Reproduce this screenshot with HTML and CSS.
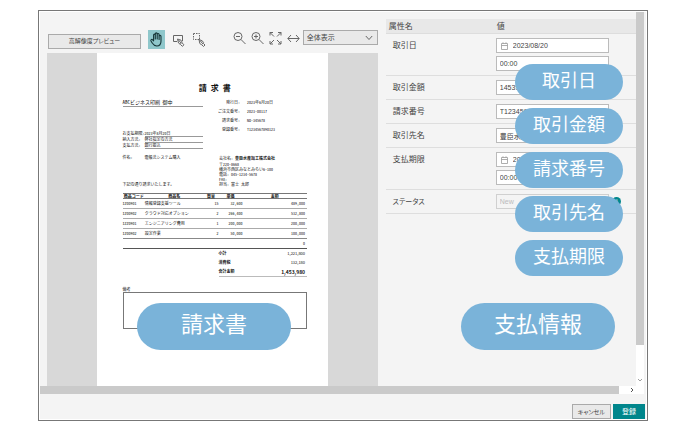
FILE: index.html
```html
<!DOCTYPE html>
<html lang="ja">
<head>
<meta charset="utf-8">
<title>支払情報登録</title>
<link rel="stylesheet" href="styles.css">
</head>
<body>
<main class="window">
  <div class="scroller">
    <div class="panes">
      <section class="preview">
        <div class="toolbar">
          <button class="btn btn-wide" type="button">高解像度プレビュー</button>
          <div class="tools">
            <button class="tool tool-active" type="button" aria-label="手のひら">
              <svg width="17" height="19" viewBox="0 0 17 19"><path d="M5.6 10.8V5.2c0-1.5 1.7-1.5 1.7 0V9 4c0-1.5 1.9-1.5 1.9 0v5-4.400c0-1.500 1.900-1.500 1.900 0V9.500 6.400c0-1.400 1.900-1.400 1.900 0V11c0 3-1.400 5-4.200 5-2.400 0-3.300-1-4.400-2.700L3 11c-.7-1.300.8-2 1.600-1.200z" fill="none" stroke="#163537" stroke-width="1.100" stroke-linejoin="round"/></svg>
            </button>
            <button class="tool" type="button" aria-label="矩形選択">
              <svg width="13" height="16" viewBox="0 0 13 16" fill="none" stroke="#666"><path d="M5 9.500H1.500v-6h9V9"/><path d="M5.500 7l1 4 1.700 1.200 2-2L9 8.200zM6.500 8l2.500 3M8.300 12.300l2 2 1.700-1.500-2-2"/></svg>
            </button>
            <button class="tool" type="button" aria-label="範囲選択">
              <svg width="14" height="16" viewBox="0 0 14 16" fill="none" stroke="#666"><path d="M1.500 1.500h6v6h-6z" stroke-dasharray="1.500 1"/><path d="M7 7.500l.8 4 1.700 1.200 2-2-1.200-1.900zM8 8.500l2.500 3M9.800 12.800l1.700 1.700 1.500-1.500-1.700-1.700"/></svg>
            </button>
          </div>
          <div class="zooms">
            <button class="tool" type="button" aria-label="縮小">
              <svg width="13" height="14" viewBox="0 0 13 14" fill="none" stroke="#666"><circle cx="5" cy="5.500" r="4"/><path d="M8 8.500l4.500 4.500M3 5.500h4"/></svg>
            </button>
            <button class="tool" type="button" aria-label="拡大">
              <svg width="13" height="14" viewBox="0 0 13 14" fill="none" stroke="#666"><circle cx="5" cy="5.500" r="4"/><path d="M8 8.500l4.500 4.500M3 5.500h4M5 3.500v4"/></svg>
            </button>
            <button class="tool" type="button" aria-label="全画面">
              <svg width="13" height="14" viewBox="0 0 13 14" fill="none" stroke="#666"><path d="M1 4.500v-3h3M1 1.500l4 4M9 1.500h3v3M12 1.500l-4 4M1 10v3h3M1 13l4-4M12 10v3H9M12 13L8 9"/></svg>
            </button>
            <button class="tool" type="button" aria-label="幅に合わせる">
              <svg width="13" height="14" viewBox="0 0 13 14" fill="none" stroke="#666"><path d="M1 7.500h11M4 4L.8 7.500 4 11M9 4l3.200 3.500L9 11"/></svg>
            </button>
          </div>
          <div class="select-wrap">
            <select class="select" aria-label="表示倍率"><option>全体表示</option></select>
            <svg class="chevron" width="8" height="6" viewBox="0 0 8 6"><path d="M.8 1L4 4.500 7.200 1" fill="none" stroke="#666"/></svg>
          </div>
        </div>

        <div class="viewer">
          <article class="paper">
            <h1 class="doc-title">請 求 書</h1>
            <div class="doc-top">
              <div>
                <p class="client">ABCビジネス印刷　御中</p>
                <dl class="terms">
                  <dt>お支払期限：</dt><dd>2023年8月20日</dd>
                  <dt>納入方法：</dt><dd>弊社指定の方法</dd>
                  <dt>支払方法：</dt><dd>銀行振込</dd>
                </dl>
              </div>
              <dl class="meta">
                <dt>発行日：</dt><dd>2023年6月20日</dd>
                <dt>ご注文番号：</dt><dd>2023-00117</dd>
                <dt>請求番号：</dt><dd>NO-345678</dd>
                <dt>登録番号：</dt><dd>T1234567890123</dd>
              </dl>
            </div>
            <div class="doc-mid">
              <div class="subject">
                <p class="pair"><span>件名：</span><span>電帳法システム購入</span></p>
                <p>下記の通り請求いたします。</p>
              </div>
              <div class="sender">
                <p class="company">会社名： <strong>豊臣水産加工株式会社</strong></p>
                <p>〒220-8668</p>
                <p>横浜市西区みなとみらい6-100</p>
                <p>電話： 045-1234-5678</p>
                <p>FAX：</p>
                <p>担当： 富士　太郎</p>
              </div>
            </div>
            <table class="items">
              <colgroup><col class="c-code"><col class="c-name"><col class="c-qty"><col class="c-price"><col></colgroup>
              <thead><tr><th>商品コード</th><th>商品名</th><th>数量</th><th>単価</th><th>金額</th></tr></thead>
              <tbody>
                <tr><td>IZ00901</td><td>情報登録支援ツール</td><td>15</td><td>32,600</td><td>489,000</td></tr>
                <tr><td>IZ00902</td><td>クラウド対応オプション</td><td>2</td><td>266,400</td><td>532,800</td></tr>
                <tr><td>IZZ0901</td><td>エンジニアリング費用</td><td>1</td><td>200,000</td><td>200,000</td></tr>
                <tr><td>IZ00902</td><td>設定作業</td><td>2</td><td>50,000</td><td>100,000</td></tr>
                <tr><td></td><td></td><td></td><td></td><td>0</td></tr>
              </tbody>
            </table>
            <dl class="totals">
              <dt>小計</dt><dd>1,221,800</dd>
              <dt>消費税</dt><dd>132,180</dd>
              <dt>合計金額</dt><dd class="grand">1,453,980</dd>
            </dl>
            <p class="note-label">備考</p>
            <div class="note"></div>
          </article>
          <div class="callout callout-big callout-doc">請求書</div>
        </div>
      </section>

      <section class="attributes">
        <table class="attrs">
          <thead><tr><th>属性名</th><th>値</th></tr></thead>
          <tbody>
            <tr>
              <td><label for="tx-date">取引日</label></td>
              <td>
                <div class="fields">
                  <div class="date">
                    <svg width="7" height="8" viewBox="0 0 7 8" fill="none" stroke="#999" stroke-width=".8"><path d="M.5 1.500h6v6h-6zM.5 3.500h6M2 .3v1.400M5 .3v1.400"/></svg>
                    <input id="tx-date" type="text" value="2023/08/20">
                  </div>
                  <input class="field" type="text" value="00:00" aria-label="取引日の時刻">
                </div>
              </td>
            </tr>
            <tr><td><label for="amount">取引金額</label></td><td><div class="fields"><input class="field" id="amount" type="text" value="1453980"></div></td></tr>
            <tr><td><label for="number">請求番号</label></td><td><div class="fields"><input class="field" id="number" type="text" value="T1234567890123"></div></td></tr>
            <tr><td><label for="partner">取引先名</label></td><td><div class="fields"><input class="field" id="partner" type="text" value="豊臣水産加工株式会社"></div></td></tr>
            <tr>
              <td><label for="due-date">支払期限</label></td>
              <td>
                <div class="fields">
                  <div class="date">
                    <svg width="7" height="8" viewBox="0 0 7 8" fill="none" stroke="#999" stroke-width=".8"><path d="M.5 1.500h6v6h-6zM.5 3.500h6M2 .3v1.400M5 .3v1.400"/></svg>
                    <input id="due-date" type="text" value="2023/08/20">
                  </div>
                  <input class="field" type="text" value="00:00" aria-label="支払期限の時刻">
                </div>
              </td>
            </tr>
            <tr>
              <td><label class="kana" for="status">ステータス</label></td>
              <td><div class="status"><div class="fields"><input class="field" id="status" type="text" value="New" disabled></div><span class="info">i</span></div></td>
            </tr>
          </tbody>
        </table>
        <div class="callouts">
          <div class="callout">取引日</div>
          <div class="callout">取引金額</div>
          <div class="callout">請求番号</div>
          <div class="callout">取引先名</div>
          <div class="callout">支払期限</div>
        </div>
        <div class="callout callout-big callout-info">支払情報</div>
      </section>
    </div>
    <div class="vbar">
      <div class="vthumb"></div>
      <svg width="8" height="12" viewBox="0 0 8 12"><path d="M2 5l2 2 2-2" fill="none" stroke="#888" stroke-width=".8"/></svg>
    </div>
  </div>
  <div class="hbar">
    <div class="hthumb"></div>
    <svg width="25" height="8" viewBox="0 0 25 8"><path d="M12 2l2 2-2 2" fill="none" stroke="#555"/></svg>
  </div>
  <footer class="footer">
    <button class="btn" type="button">キャンセル</button>
    <button class="btn btn-primary" type="button">登録</button>
  </footer>
</main>
</body>
</html>
```
FILE: styles.css
```css
* { box-sizing: border-box; }

body {
  margin: 0;
  min-height: 100vh;
  padding: 10px 38px;
  display: flex;
  background: #fff;
  color: #444;
  font-family: "Liberation Sans", "Noto Sans CJK JP", sans-serif;
  font-size: 8px;
  line-height: 12px;
}

h1, p, dl, dd { margin: 0; }
table { border-collapse: collapse; width: 100%; }
button, input, select { font: inherit; color: inherit; margin: 0; }
svg { display: block; flex: none; }

.window {
  flex: 1;
  min-width: 0;
  display: flex;
  flex-direction: column;
  padding: 1px;
  border: 1px solid #777;
  background: #f4f4f4 content-box;
}

.scroller { flex: 1; display: flex; margin-right: 2px; }
.panes { flex: 1; min-width: 0; display: grid; grid-template-columns: 58fr 42fr; }

.vbar { width: 8px; background: #fff; display: flex; flex-direction: column; justify-content: space-between; }
.vthumb { height: 89%; background: #cacaca; }
.hbar { display: flex; height: 8px; margin-right: 2px; background: #fff; }
.hthumb { flex: 1; background: #cacaca; }

.footer { display: flex; justify-content: flex-end; gap: 2px; padding: 10px 1px 0 0; }

.btn {
  height: 15px;
  padding: 0 5px;
  border: 1px solid #aaa;
  background: #e9e9e9;
  font-size: 6px;
  line-height: 12px;
  font-feature-settings: "palt";
  white-space: nowrap;
}
.btn-wide { width: 93px; }
.btn-primary { min-width: 32px; border-color: #00868c; background: #00868c; color: #fff; font-size: 7px; }

/* preview pane */
.preview { display: flex; flex-direction: column; gap: 4px; padding: 18px 8px 0 7px; min-width: 0; }
.toolbar { display: flex; align-items: center; height: 19px; padding-left: 1px; }
.toolbar .btn-wide { margin-top: 3px; }
.tools { display: flex; align-items: center; gap: 7px; margin-left: 7px; }
.zooms { display: flex; align-items: center; gap: 5px; margin: 0 3px 4px auto; }
.tool { display: flex; padding: 0; border: 0; background: none; }
.tool-active { background: #8fc7cb; }

.select-wrap { position: relative; align-self: flex-start; width: 75px; }
.select {
  display: block;
  width: 100%;
  height: 15px;
  padding: 0 3px;
  border: 1px solid #aaa;
  border-radius: 0;
  background: #e9e9e9;
  appearance: none;
  font-size: 7px;
}
.chevron { position: absolute; right: 5px; top: 5px; pointer-events: none; }

.viewer { position: relative; flex: 1; background: #d8d8d8; }

/* invoice */
.paper {
  width: 70%;
  height: 100%;
  margin: 0 auto;
  padding: 30px 21px 0 26px;
  background: #fff;
  color: #111;
  font-family: "Noto Sans CJK JP", sans-serif;
  font-feature-settings: "hwid";
  font-size: 4px;
  line-height: 5px;
}
.doc-title { text-align: center; font-size: 8px; line-height: 10px; font-weight: 700; }
.doc-top, .doc-mid { display: grid; grid-template-columns: 81fr 105fr; }
.doc-top { margin-top: 5px; }
.client { font-size: 5px; line-height: 8px; border-bottom: 1px solid #999; }
.terms { display: grid; grid-template-columns: 22px 1fr; margin-top: 24px; white-space: nowrap; }
.terms dd { border-bottom: 1px solid #999; }
.meta { display: grid; grid-template-columns: 37px 1fr; column-gap: 7px; line-height: 9px; align-content: start; }
.meta dt { text-align: right; }
.doc-mid { margin-top: 5px; }
.subject { display: flex; flex-direction: column; justify-content: space-between; }
.pair { display: grid; grid-template-columns: 22px 1fr; line-height: 7px; }
.sender { padding-left: 16px; }
.company { line-height: 8px; }

.items { margin-top: 6px; table-layout: fixed; }
.c-code { width: 12%; }
.c-name { width: 32%; }
.c-qty { width: 8%; }
.c-price { width: 13%; }
.items th, .items td { padding: 0; white-space: nowrap; }
.items th { height: 5px; line-height: 4px; border-top: 1px solid #777; border-bottom: 1px solid #777; }
.items td { height: 10px; border-bottom: 1px solid #aaa; text-align: right; }
.items td:nth-child(1), .items td:nth-child(2) { text-align: left; }
.items td:last-child { padding-right: 2px; }
.items tbody tr:nth-child(4) td { border-bottom-color: #888; }
.items tbody tr:last-child td { border-bottom-color: #555; }

.totals {
  display: grid;
  grid-template-columns: 1fr 1fr;
  width: 48%;
  margin-left: auto;
  padding-right: 2px;
  line-height: 9px;
  border-bottom: 1px solid #bbb;
}
.totals dt { font-weight: 700; }
.totals dd { text-align: right; font-feature-settings: normal; }
.totals .grand { font-size: 5px; font-weight: 700; }
.note-label { margin-top: 10px; }
.note { height: 37px; border: 1px solid #777; }

/* attribute pane */
.attributes { position: relative; padding-top: 7px; }
.attrs { table-layout: fixed; border-collapse: separate; border-spacing: 0; }
.attrs th { padding: 2px 0 0 3px; background: #e8e8e8; border-bottom: 1px solid #ddd; font-weight: 400; text-align: left; }
.attrs th:last-child { padding-left: 1px; }
.attrs th:first-child { width: 44%; }
.attrs td { padding: 4px 0; border-bottom: 1px solid #dedede; vertical-align: top; }
.attrs td:first-child { padding-left: 7px; }
.attrs label { display: block; line-height: 15px; }
.attrs .kana { font-size: 7px; font-feature-settings: "palt"; }
.fields { display: flex; flex-direction: column; gap: 3px; width: 81%; }
.field, .date { width: 100%; height: 15px; border: 1px solid #bbb; border-radius: 0; background: #fff; font-size: 7px; }
.field { padding: 0 3px; }
.field:disabled { background: #f4f4f4; border-color: #d0d0d0; color: #bbb; }
.date { display: flex; align-items: center; gap: 5px; padding-left: 4px; }
.date input { flex: 1; min-width: 0; padding: 0; border: 0; background: none; }
.status { display: flex; align-items: center; gap: 3px; }
.info { width: 9px; height: 9px; border-radius: 50%; background: #00868c; color: #fff; font-size: 7px; line-height: 9px; text-align: center; }

/* callouts over the panes */
.callout {
  display: flex;
  align-items: center;
  justify-content: center;
  width: 108px;
  height: 36px;
  padding-bottom: 3px;
  border-radius: 18px;
  background: #7ab3d9;
  color: #fff;
  font-size: 18px;
  line-height: 24px;
}
.callouts { position: absolute; top: 52px; right: 13px; display: flex; flex-direction: column; gap: 8px; }
.callout-big { position: absolute; width: 154px; height: 47px; border-radius: 24px; font-size: 22px; }
.callout-doc { left: 90px; bottom: 36px; }
.callout-info { right: 21px; bottom: 36px; }
```
